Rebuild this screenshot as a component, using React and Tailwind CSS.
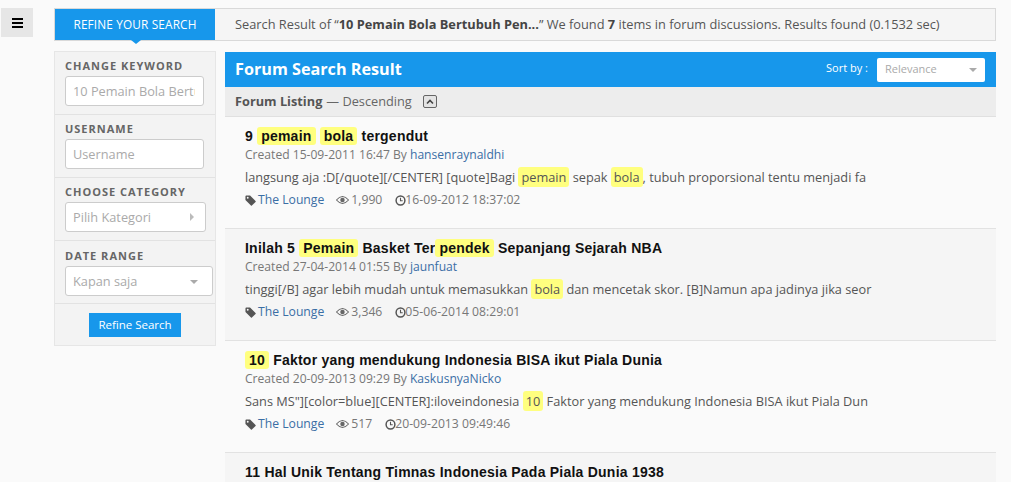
import React from "react";

const Hl = ({ children, title }) => (
  <span className={`bg-[#ffff7f] rounded-[3px] py-[1px] ${title ? "px-[4px]" : "px-[3px]"}`}>{children}</span>
);

const Tag = () => (
  <svg width="11" height="11" viewBox="0 0 12 12" className="mr-[2px] shrink-0">
    <path d="M0.5 1.5 Q0.5 0.5 1.5 0.5 H5.5 L11.5 6.5 Q12 7 11.5 7.5 L7.5 11.5 Q7 12 6.5 11.5 L0.5 5.5 Z" fill="#555" />
    <circle cx="3" cy="3" r="1" fill="#fafafa" />
  </svg>
);

const Eye = () => (
  <svg width="13" height="10" viewBox="0 0 14 10" className="mr-[2px]">
    <path d="M0.5 5 Q7 -2.5 13.5 5 Q7 12.5 0.5 5 Z" fill="none" stroke="#666" strokeWidth="1.1" />
    <circle cx="7" cy="5" r="2.4" fill="#666" />
  </svg>
);

const Clock = () => (
  <svg width="11" height="11" viewBox="0 0 12 12" className="-mr-[1px]">
    <circle cx="6" cy="6" r="4.8" fill="none" stroke="#555" strokeWidth="1.6" />
    <path d="M6 3 V6.3 H8.4" fill="none" stroke="#555" strokeWidth="1.2" />
  </svg>
);

const Item = ({ title, created, by, body, views, date, alt }) => (
  <div className={`h-[112px] border-b border-[#e2e2e2] pl-[20px] pt-[10px] ${alt ? "bg-[#f5f5f5]" : "bg-[#fafafa]"}`}>
    <h3 className="font-['Liberation_Sans',sans-serif] font-bold text-[14px] leading-[18px] text-[#111] tracking-[0.23px] whitespace-nowrap">{title}</h3>
    {created && (
      <>
        <div className="text-[12.1px] leading-[17px] text-[#777] mt-[1px]">
          Created {created} By <a className="text-[#3a6ea5]">{by}</a>
        </div>
        <p className="text-[12.75px] leading-[18px] text-[#555] mt-[5px] whitespace-nowrap">{body}</p>
        <div className="flex items-center text-[12.2px] leading-[18px] text-[#777] mt-[5px]">
          <Tag />
          <a className="text-[#3a6ea5]">The Lounge</a>
          <span className="flex items-center ml-[12px]"><Eye />{views}</span>
          <span className="flex items-center ml-[13px]"><Clock />{date}</span>
        </div>
      </>
    )}
  </div>
);

const Caret = () => (
  <span className="w-0 h-0 border-x-[4px] border-x-transparent border-t-[4px] border-t-[#aaa]" />
);

const Section = ({ label, children, top = "pt-[6px]" }) => (
  <div className={`px-[10px] border-b border-[#e2e2e2] h-[63px] ${top}`}>
    <div className="text-[11px] leading-[15px] font-bold tracking-[1px] text-[#666] whitespace-nowrap">{label}</div>
    {children}
  </div>
);

const Field = ({ width, children }) => (
  <div className={`mt-[3px] h-[30px] bg-white border border-[#ccc] rounded-[3px] pl-[7px] pt-[2px] flex items-center text-[12.75px] text-[#aaa] overflow-hidden whitespace-nowrap ${width}`}>
    {children}
  </div>
);

export default function App() {
  return (
    <div className="h-[482px] w-[1011px] overflow-hidden bg-[#fafafa] font-['Open_Sans',sans-serif] flex">
      <div className="w-[54px] shrink-0 pl-[1px] pt-[8px]">
        <div className="w-[32px] h-[29px] bg-[#e6e6e6] flex flex-col items-center justify-center gap-[2px]">
          <span className="block w-[11px] h-[2px] bg-black" />
          <span className="block w-[11px] h-[2px] bg-black" />
          <span className="block w-[11px] h-[2px] bg-black" />
        </div>
      </div>
      <div className="w-[942px] pt-[8px]">
        <div className="relative h-[33px] border border-[#d9d9d9] bg-[#f5f5f5] flex items-center">
          <div className="relative w-[160px] h-[31px] bg-[#1797eb] text-white text-[11.8px] tracking-[0.15px] flex items-center justify-center">
            REFINE YOUR SEARCH
            <span className="absolute left-[76px] top-[31px] w-0 h-0 border-x-[5px] border-x-transparent border-t-[4px] border-t-[#1797eb]" />
          </div>
          <div className="pl-[20px] text-[12.8px] text-[#555] whitespace-nowrap">
            Search Result of “<b className="text-[#444]">10 Pemain Bola Bertubuh Pen...</b>” We found <b className="text-[#444]">7</b> items in forum discussions. Results found (0.1532 sec)
          </div>
        </div>
        <div className="flex items-start mt-[10px]">
          <div className="w-[162px] h-[295px] bg-[#f3f3f3] border border-[#e6e6e6] shrink-0">
            <Section label="CHANGE KEYWORD">
              <Field width="w-[139px]"><span className="overflow-hidden w-[122px]">10 Pemain Bola Bertubuh</span></Field>
            </Section>
            <Section label="USERNAME">
              <Field width="w-[139px]">Username</Field>
            </Section>
            <Section label="CHOOSE CATEGORY">
              <Field width="w-[141px] relative">
                Pilih Kategori
                <span className="absolute left-[124px] top-[10px] w-0 h-0 border-y-[4px] border-y-transparent border-l-[4px] border-l-[#bbb]" />
              </Field>
            </Section>
            <Section label="DATE RANGE" top="pt-[7px]">
              <Field width="w-[148px] justify-between pr-[14px]">
                Kapan saja
                <Caret />
              </Field>
            </Section>
            <div className="flex justify-center pt-[9px]">
              <div className="w-[92px] h-[24px] bg-[#1797eb] text-white text-[11.5px] flex items-center justify-center">Refine Search</div>
            </div>
          </div>
          <div className="ml-[9px] w-[771px] mt-[1px]">
            <div className="h-[35px] bg-[#1797eb] flex items-center justify-between pl-[10px] pr-[11px]">
              <div className="text-white font-bold text-[16.2px]">Forum Search Result</div>
              <div className="flex items-center">
                <span className="text-white text-[11px] mr-[9px] -mt-[2px]">Sort by :</span>
                <div className="w-[108px] h-[24px] bg-white rounded-[2px] flex items-center justify-between pl-[8px] pr-[8px] text-[11px] text-[#aaa]">
                  Relevance
                  <Caret />
                </div>
              </div>
            </div>
            <div className="h-[30px] bg-[#ededed] border-b border-[#e0e0e0] pl-[10px] flex items-center text-[12.75px] text-[#666]">
              <b className="text-[#555]">Forum Listing</b>
              <span className="ml-[4px]">— Descending</span>
              <span className="ml-[11px] w-[14px] h-[13px] border border-[#666] rounded-[2px] bg-[#e4e4e4] flex items-center justify-center">
                <svg width="8" height="6" viewBox="0 0 8 6"><path d="M1 4.5 L4 1.5 L7 4.5" fill="none" stroke="#444" strokeWidth="1.6" /></svg>
              </span>
            </div>
            <Item
              title={<>9 <Hl title>pemain</Hl> <Hl title>bola</Hl> tergendut</>}
              created="15-09-2011 16:47" by="hansenraynaldhi"
              body={<>langsung aja :D[/quote][/CENTER] [quote]Bagi <Hl>pemain</Hl> sepak <Hl>bola</Hl>, tubuh proporsional tentu menjadi fa</>}
              views="1,990" date="16-09-2012 18:37:02"
            />
            <Item alt
              title={<>Inilah 5 <Hl title>Pemain</Hl> Basket Ter<Hl title>pendek</Hl> Sepanjang Sejarah NBA</>}
              created="27-04-2014 01:55" by="jaunfuat"
              body={<>tinggi[/B] agar lebih mudah untuk memasukkan <Hl>bola</Hl> dan mencetak skor. [B]Namun apa jadinya jika seor</>}
              views="3,346" date="05-06-2014 08:29:01"
            />
            <Item
              title={<><Hl title>10</Hl> Faktor yang mendukung Indonesia BISA ikut Piala Dunia</>}
              created="20-09-2013 09:29" by="KaskusnyaNicko"
              body={<>Sans MS"][color=blue][CENTER]:iloveindonesia <Hl>10</Hl> Faktor yang mendukung Indonesia BISA ikut Piala Dun</>}
              views="517" date="20-09-2013 09:49:46"
            />
            <Item alt title="11 Hal Unik Tentang Timnas Indonesia Pada Piala Dunia 1938" />
          </div>
        </div>
      </div>
    </div>
  );
}
